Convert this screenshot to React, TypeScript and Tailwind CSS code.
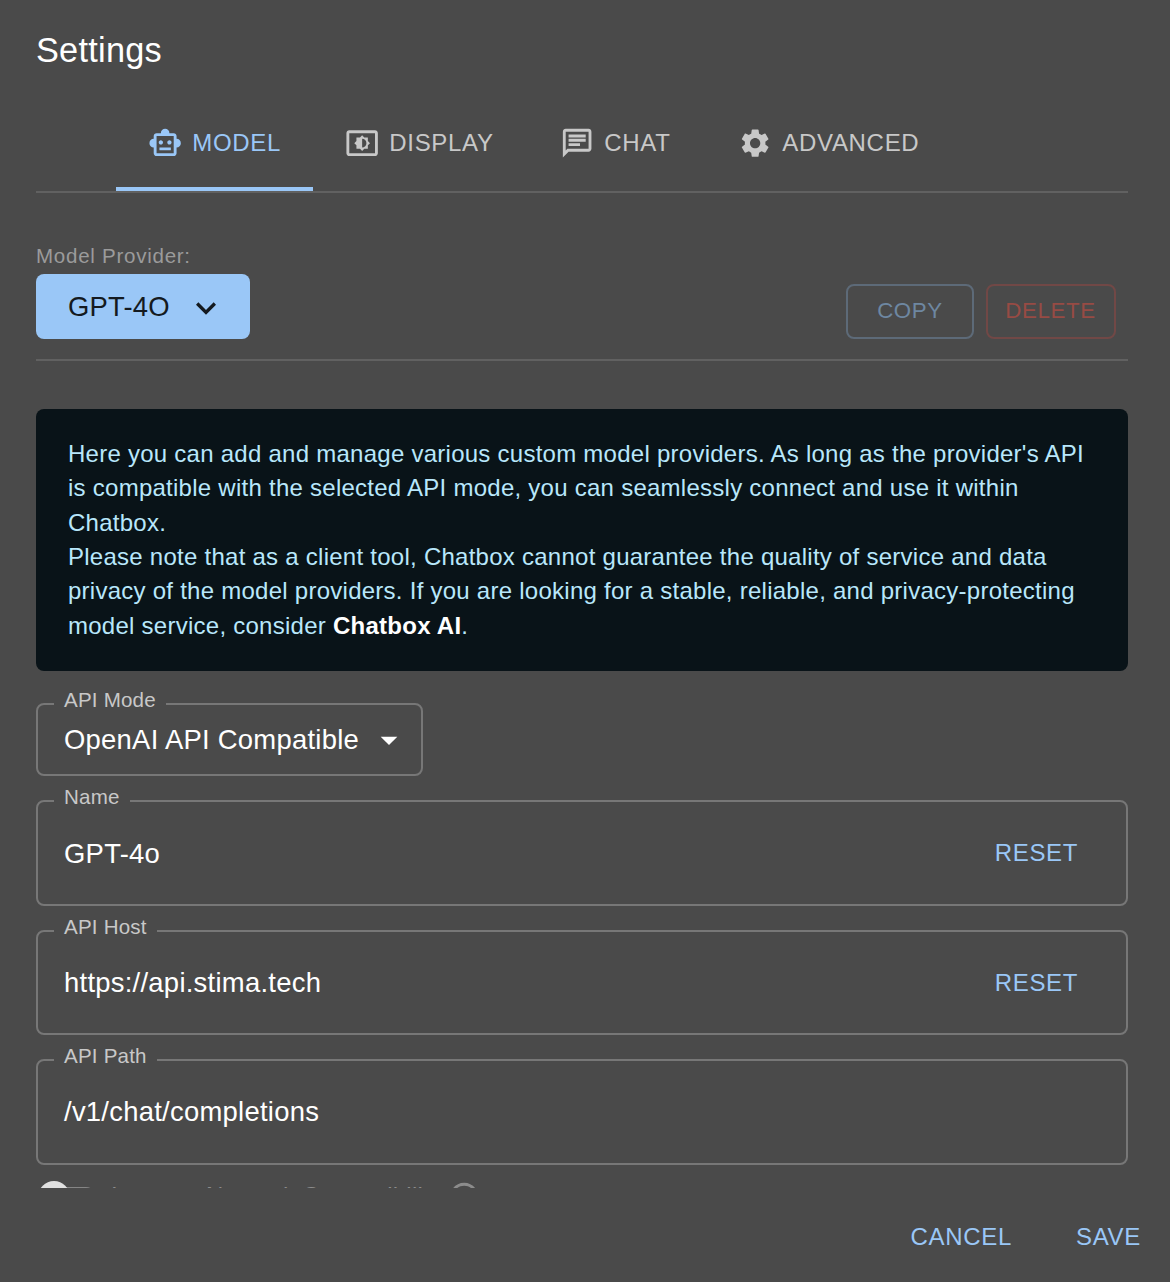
import React from "react";
import {
  MdOutlineSmartToy,
  MdOutlineSettingsBrightness,
  MdOutlineChat,
  MdSettings,
  MdKeyboardArrowDown,
  MdArrowDropDown,
  MdHelpOutline,
} from "react-icons/md";

const tabs = [
  { label: "MODEL", icon: MdOutlineSmartToy, active: true, width: "w-[197px]" },
  { label: "DISPLAY", icon: MdOutlineSettingsBrightness, active: false, width: "w-[215px]" },
  { label: "CHAT", icon: MdOutlineChat, active: false, width: "w-[178px]" },
  { label: "ADVANCED", icon: MdSettings, active: false, width: "w-[246px]" },
];

function FieldLabel({ children }: { children: React.ReactNode }) {
  return (
    <label className="absolute -top-[21px] left-4 whitespace-nowrap bg-[#4a4a4a] px-[10px] text-[20.57px] leading-[32px] tracking-[0.00938em] text-[#c8c8c8]">
      {children}
    </label>
  );
}

function Field({
  label,
  value,
  className,
  valueClassName = "",
  resettable = false,
}: {
  label: string;
  value: string;
  className: string;
  valueClassName?: string;
  resettable?: boolean;
}) {
  return (
    <div
      className={`relative flex items-center justify-between rounded-lg border-2 border-[#777777] pl-[26px] pr-[48px] ${className}`}
    >
      <FieldLabel>{label}</FieldLabel>
      <span className={`text-[27.43px] leading-[40px] tracking-[0.00938em] text-white ${valueClassName}`}>
        {value}
      </span>
      {resettable && (
        <button className="text-[24px] leading-[42px] tracking-[0.026em] text-[#9ac7f7]">RESET</button>
      )}
    </div>
  );
}

export default function App() {
  return (
    <div className="flex h-[1282px] w-[1170px] flex-col overflow-hidden bg-[#4a4a4a] font-['Liberation_Sans',sans-serif]">
      <h2 className="mt-[23px] pl-9 text-[34.29px] leading-[55px] tracking-[0.0075em] text-white">Settings</h2>

      <main className="flex h-[1110px] flex-col overflow-hidden pl-9 pr-[42px]">
        <nav className="mt-[17px] flex h-[98px] shrink-0 border-b-2 border-[#616161] pl-20">
          {tabs.map(({ label, icon: Icon, active, width }) => (
            <button
              key={label}
              className={`flex shrink-0 items-center gap-[10px] border-b-4 pl-8 pt-1 text-[24px] tracking-[0.02857em] ${width} ${
                active ? "border-[#9ac7f7] text-[#9ac7f7]" : "border-transparent text-[#c8c8c8]"
              }`}
            >
              <Icon className="size-[34.29px] shrink-0" />
              <span>{label}</span>
            </button>
          ))}
        </nav>

        <section className="flex h-[168px] shrink-0 items-end justify-between border-b-2 border-[#616161] pb-5">
          <div className="flex flex-col items-start">
            <span className="mb-[2px] text-[20.57px] leading-[32px] tracking-[0.035em] text-[#9b9b9b]">
              Model Provider:
            </span>
            <button className="flex h-[65px] w-[214px] items-center justify-between rounded-lg bg-[#9ac7f7] pl-8 pr-6 text-[27.43px] tracking-[0.008em] text-[#141a20]">
              GPT-4O
              <MdKeyboardArrowDown className="mt-[2px] size-10" />
            </button>
          </div>
          <div className="flex gap-3 pr-3 text-[22.29px] tracking-[0.02857em]">
            <button className="h-[55px] w-32 rounded-lg border-2 border-[#5d6a78] pb-[2px] text-[#6e87a1]">COPY</button>
            <button className="h-[55px] w-[130px] rounded-lg border-2 border-[#714846] pb-[2px] pr-[1px] text-[#974b44]">
              DELETE
            </button>
          </div>
        </section>

        <section className="mt-12 h-[262px] shrink-0 rounded-lg bg-[#091318] px-8 pt-7 text-[24px] leading-[34.32px] tracking-[0.01071em] text-[#b8e7fb]">
          <p>
            Here you can add and manage various custom model providers. As long as the provider's API
            <br />
            is compatible with the selected API mode, you can seamlessly connect and use it within
            <br />
            Chatbox.
          </p>
          <p>
            Please note that as a client tool, Chatbox cannot guarantee the quality of service and data
            <br />
            privacy of the model providers. If you are looking for a stable, reliable, and privacy-protecting
            <br />
            model service, consider <b className="text-white">Chatbox AI</b>.
          </p>
        </section>

        <div className="relative mt-8 flex h-[73px] w-[387px] shrink-0 items-center justify-between rounded-lg border-2 border-[#777777] pl-[26px] pr-3 text-white">
          <FieldLabel>API Mode</FieldLabel>
          <span className="text-[27.43px] leading-[40px] tracking-[0.00938em]">OpenAI API Compatible</span>
          <MdArrowDropDown className="size-10" />
        </div>
        <Field label="Name" value="GPT-4o" className="mt-6 h-[106px] shrink-0" valueClassName="pt-[2px]" resettable />
        <Field label="API Host" value="https://api.stima.tech" className="mt-6 h-[105px] shrink-0" resettable />
        <Field label="API Path" value="/v1/chat/completions" className="mt-6 h-[106px] shrink-0" />

        <div className="mt-[15px] flex h-[34px] shrink-0 items-center">
          <div className="flex h-8 w-[58px] items-center pl-[2px]">
            <div className="z-10 size-8 shrink-0 rounded-full bg-[#e0e0e0]" />
            <div className="-ml-[26px] h-5 w-[52px] shrink-0 rounded-full bg-[#858585]" />
          </div>
          <span className="ml-[17px] w-[320px] whitespace-nowrap pb-[2px] text-[24px] leading-[34px] tracking-[0.008em] text-[#8c8c8c]">
            Improve Network Compatibility
          </span>
          <MdHelpOutline className="ml-4 size-[34.29px] text-[#8c8c8c]" />
        </div>
      </main>

      <footer className="flex h-[94px] items-center justify-end gap-16 pr-[29px] pt-1 text-[24px] tracking-[0.02857em] text-[#9ac7f7]">
        <button>CANCEL</button>
        <button>SAVE</button>
      </footer>
    </div>
  );
}
